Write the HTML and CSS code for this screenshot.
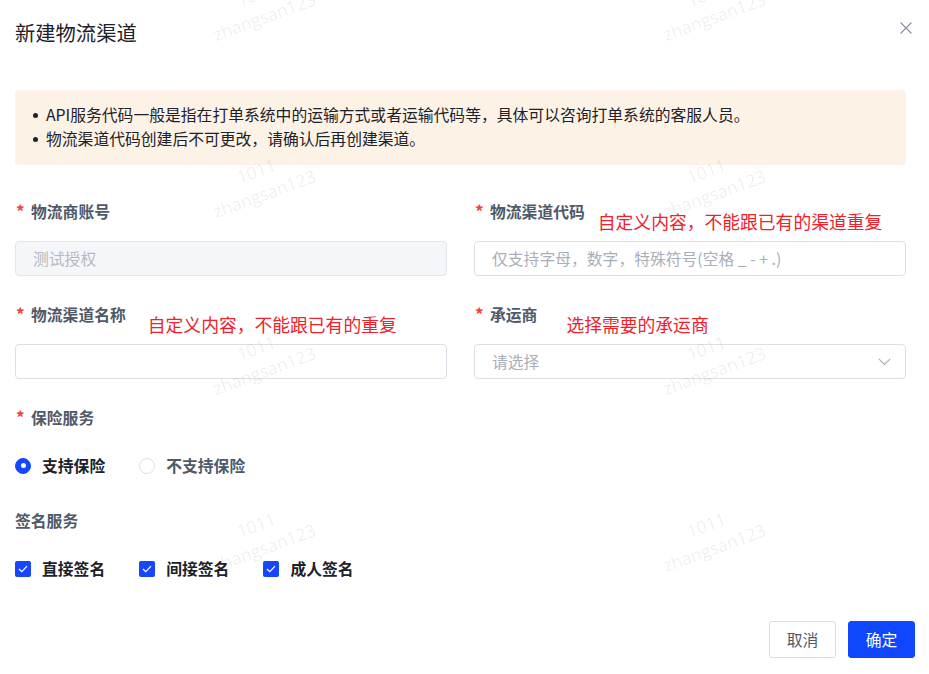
FILE: index.html
```html
<!DOCTYPE html>
<html lang="zh-CN">
<head>
<meta charset="utf-8">
<title>新建物流渠道</title>
<link rel="stylesheet" href="styles.css">
</head>
<body>
<div class="modal">
  <header class="modal-header">
    <h1 class="modal-title">新建物流渠道</h1>
    <span class="close" aria-label="关闭">
      <svg width="12" height="12" viewBox="0 0 12 12"><path d="M0.5 0.5 L11.5 11.5 M11.5 0.5 L0.5 11.5" stroke="#86909c" stroke-width="1.1" fill="none"/></svg>
    </span>
  </header>

  <div class="alert">
    <ul class="alert-list">
      <li>API服务代码一般是指在打单系统中的运输方式或者运输代码等，具体可以咨询打单系统的客服人员。</li>
      <li>物流渠道代码创建后不可更改，请确认后再创建渠道。</li>
    </ul>
  </div>

  <div class="form-grid">
    <div class="form-item">
      <div class="label-row"><span class="req">*</span><span class="label">物流商账号</span></div>
      <div class="input disabled">测试授权</div>
    </div>
    <div class="form-item">
      <div class="label-row"><span class="req">*</span><span class="label">物流渠道代码</span><span class="note note-a">自定义内容，不能跟已有的渠道重复</span></div>
      <div class="input placeholder">仅支持字母，数字，特殊符号(空格 _ - + .)</div>
    </div>
    <div class="form-item">
      <div class="label-row"><span class="req">*</span><span class="label">物流渠道名称</span><span class="note note-b">自定义内容，不能跟已有的重复</span></div>
      <div class="input"></div>
    </div>
    <div class="form-item">
      <div class="label-row"><span class="req">*</span><span class="label">承运商</span><span class="note note-c">选择需要的承运商</span></div>
      <div class="input placeholder select">
        <span>请选择</span>
        <svg width="13" height="8" viewBox="0 0 13 8"><path d="M0.8 0.8 L6.5 6.5 L12.2 0.8" stroke="#a9aeb8" stroke-width="1.1" fill="none"/></svg>
      </div>
    </div>
  </div>

  <div class="section">
    <div class="label-row"><span class="req">*</span><span class="label">保险服务</span></div>
    <div class="choice-row">
      <span class="choice"><span class="radio checked"></span><span class="choice-text strong">支持保险</span></span>
      <span class="choice"><span class="radio"></span><span class="choice-text">不支持保险</span></span>
    </div>
  </div>

  <div class="section">
    <div class="label-row"><span class="label">签名服务</span></div>
    <div class="choice-row">
      <span class="choice"><span class="checkbox"><svg width="10" height="8" viewBox="0 0 10 8"><path d="M1 4 L3.8 6.6 L9 1.2" stroke="#fff" stroke-width="1.2" fill="none"/></svg></span><span class="choice-text strong">直接签名</span></span>
      <span class="choice"><span class="checkbox"><svg width="10" height="8" viewBox="0 0 10 8"><path d="M1 4 L3.8 6.6 L9 1.2" stroke="#fff" stroke-width="1.2" fill="none"/></svg></span><span class="choice-text strong">间接签名</span></span>
      <span class="choice"><span class="checkbox"><svg width="10" height="8" viewBox="0 0 10 8"><path d="M1 4 L3.8 6.6 L9 1.2" stroke="#fff" stroke-width="1.2" fill="none"/></svg></span><span class="choice-text strong">成人签名</span></span>
    </div>
  </div>

  <footer class="footer">
    <button class="btn btn-default">取消</button>
    <button class="btn btn-primary">确定</button>
  </footer>

  <div class="wm-layer" aria-hidden="true">
    <div class="wm"><span>1011</span><span>zhangsan123</span></div>
    <div class="wm"><span>1011</span><span>zhangsan123</span></div>
    <div class="wm"><span>1011</span><span>zhangsan123</span></div>
    <div class="wm"><span>1011</span><span>zhangsan123</span></div>
    <div class="wm"><span>1011</span><span>zhangsan123</span></div>
    <div class="wm"><span>1011</span><span>zhangsan123</span></div>
    <div class="wm"><span>1011</span><span>zhangsan123</span></div>
    <div class="wm"><span>1011</span><span>zhangsan123</span></div>
    <div class="wm"><span>1011</span><span>zhangsan123</span></div>
    <div class="wm"><span>1011</span><span>zhangsan123</span></div>
  </div>
</div>
</body>
</html>
```

FILE: styles.css
```css
* { box-sizing: border-box; }
html, body { margin: 0; padding: 0; background: #fff; }
body {
  font-family: "Noto Sans CJK SC", "Noto Sans", sans-serif;
  color: #1d2129;
}
.modal {
  position: relative;
  width: 929px;
  height: 674px;
  overflow: hidden;
  background: #fff;
}
.modal-header {
  display: flex;
  justify-content: space-between;
  align-items: center;
  padding: 20px 17px 0 15px;
}
.modal-title {
  margin: 0;
  font-size: 20.3px;
  line-height: 24px;
  font-weight: 400;
  color: #1d2129;
}
.close { display: flex; width: 12px; height: 12px; margin-top: -8px; }

.alert {
  margin: 46px 23px 0 15px;
  background: #fcf2e6;
  border-radius: 4px;
  padding: 13px 0 14px 18px;
}
.alert-list { list-style: none; margin: 0; padding: 0; }
.alert-list li {
  display: flex;
  align-items: center;
  font-size: 15.8px;
  line-height: 24px;
  color: #1d2129;
  white-space: nowrap;
}
.alert-list li::before {
  content: "";
  width: 5px;
  height: 5px;
  border-radius: 50%;
  background: #1d2129;
  margin-right: 8px;
  flex: none;
}

.form-grid {
  display: grid;
  grid-template-columns: 432px 432px;
  column-gap: 27px;
  margin: 35px 0 0 15px;
}
.form-item { margin-bottom: 27px; }
.label-row {
  display: flex;
  align-items: flex-start;
  height: 24px;
  line-height: 24px;
  font-size: 15.8px;
  white-space: nowrap;
}
.req {
  color: #f53f3f;
  font-weight: 700;
  font-size: 17px;
  line-height: 22px;
  width: 16px;
  padding-left: 1px;
}
.label { color: #4e5969; font-weight: 600; }
.note {
  color: #f0212a;
  font-size: 17.8px;
  line-height: 24px;
  margin-top: 9px;
}
.note-a { margin-left: 13px; }
.note-b { margin-left: 22px; }
.note-c { margin-left: 29px; }

.input {
  margin-top: 17px;
  height: 35px;
  border: 1px solid #dcdfe6;
  border-radius: 4px;
  padding: 0 14px 0 17px;
  display: flex;
  align-items: center;
  font-size: 15.8px;
  color: #1d2129;
}
.input.disabled {
  background: #f4f6fa;
  border-color: #e3e6ec;
  color: #b5b9c1;
}
.input.placeholder { color: #a9aeb8; }
.input.select { justify-content: space-between; }

.section { margin-left: 15px; }
.choice-row {
  display: flex;
  align-items: center;
  height: 35px;
  margin-top: 18px;
  margin-bottom: 26px;
  gap: 34px;
}
.choice { display: flex; align-items: center; gap: 11px; }
.choice-text {
  font-size: 15.8px;
  font-weight: 600;
  color: #4e5969;
  line-height: 24px;
}
.choice-text.strong { color: #1d2129; }
.radio {
  width: 16px;
  height: 16px;
  border-radius: 50%;
  border: 1px solid #dcdfe6;
  display: flex;
  align-items: center;
  justify-content: center;
}
.radio.checked { background: #1647ff; border-color: #1647ff; }
.radio.checked::after {
  content: "";
  width: 5px;
  height: 5px;
  border-radius: 50%;
  background: #fff;
}
.checkbox {
  width: 16px;
  height: 16px;
  border-radius: 2px;
  background: #1647ff;
  display: flex;
  align-items: center;
  justify-content: center;
}

.footer {
  display: flex;
  justify-content: flex-end;
  gap: 12px;
  padding-right: 14px;
  margin-top: 35px;
}
.btn {
  width: 67px;
  height: 37px;
  border-radius: 3px;
  font-family: "Noto Sans CJK SC", "Noto Sans", sans-serif;
  font-size: 15.8px;
  padding: 0;
  cursor: pointer;
}
.btn-default { background: #fff; border: 1px solid #d9dce2; color: #4e5969; }
.btn-primary { background: #1146ff; border: 1px solid #1146ff; color: #fff; }

.wm-layer {
  position: absolute;
  left: 35px;
  top: -84px;
  display: grid;
  grid-template-columns: repeat(2, 450px);
  grid-auto-rows: 177px;
  pointer-events: none;
}
.wm {
  display: flex;
  flex-direction: column;
  align-items: center;
  justify-content: center;
  transform: rotate(-20deg);
  font-family: "Open Sans", sans-serif;
  font-size: 17.5px;
  line-height: 24px;
  color: rgba(0, 0, 0, 0.075);
  white-space: nowrap;
}
```
